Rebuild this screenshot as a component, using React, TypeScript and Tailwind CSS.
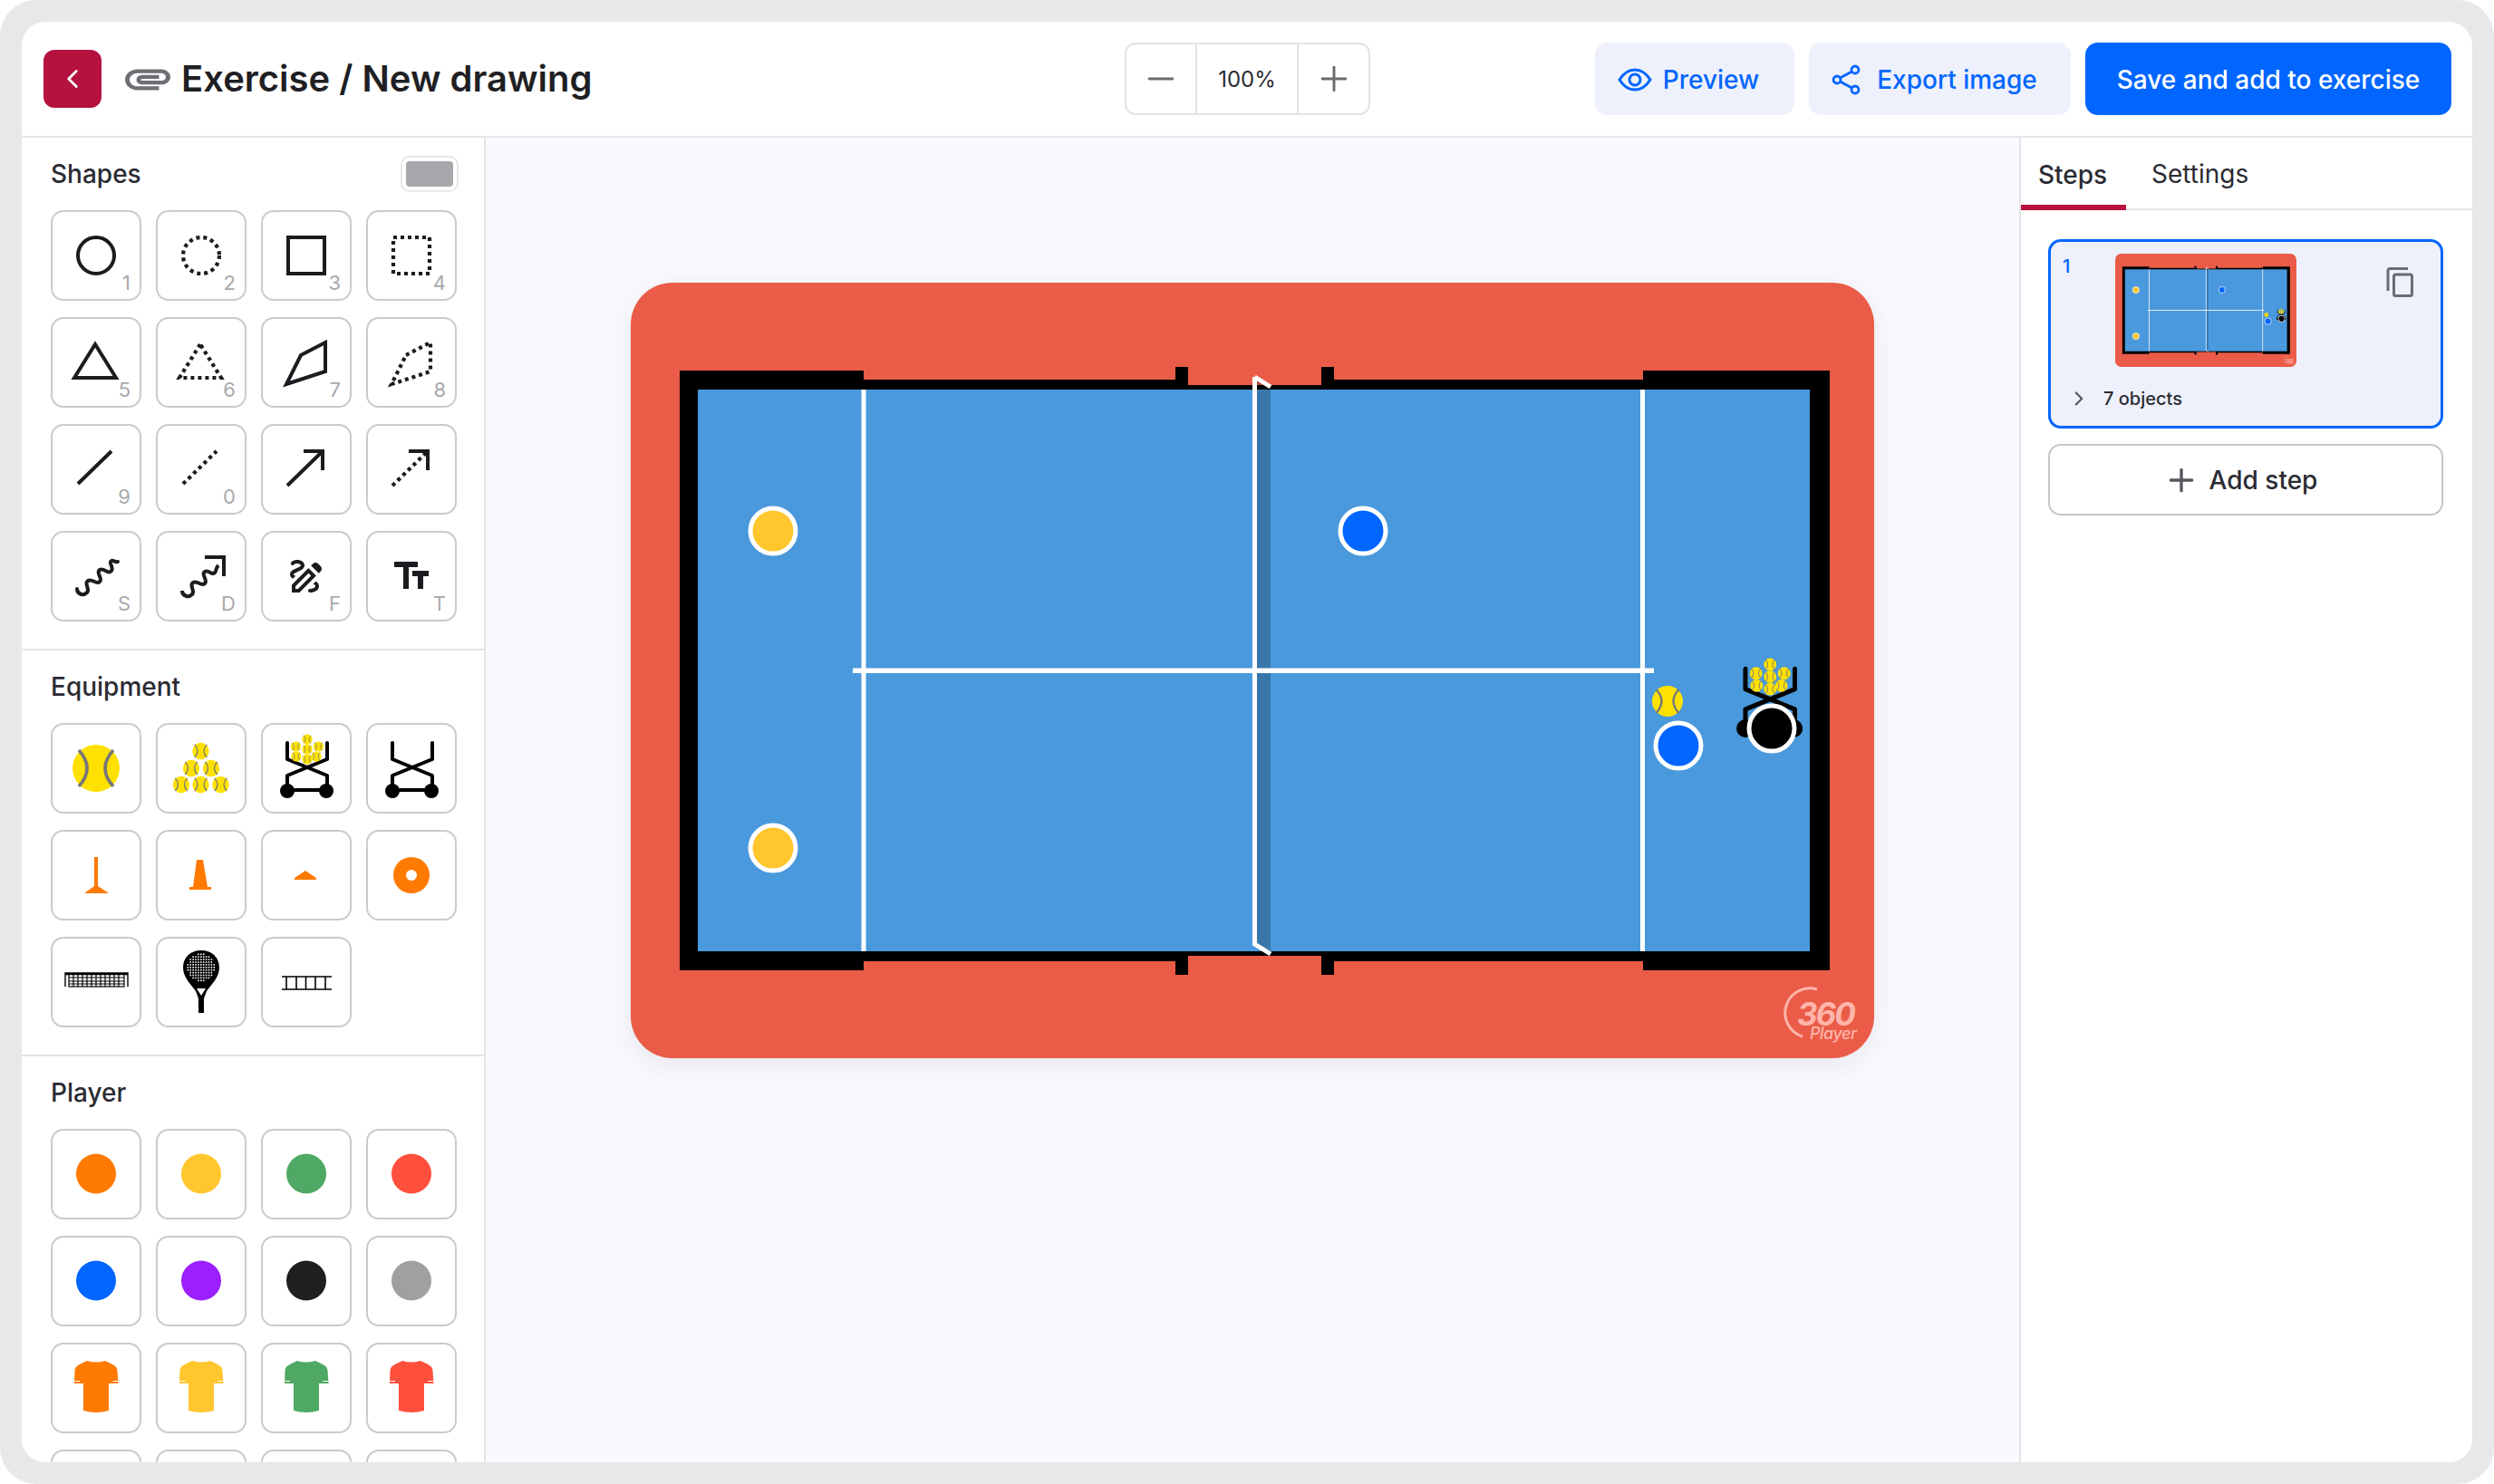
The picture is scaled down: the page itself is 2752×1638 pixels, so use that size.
import React from 'react';
import { ChevronLeft, ChevronRight, Minus, Plus } from 'lucide-react';
import { MdAttachment, MdOutlineDraw, MdTextFields } from 'react-icons/md';

const INK = '#1c1c20';
const ORANGE = '#ff7a00';

const Ball = ({ x, y, r }: { x: number; y: number; r: number }) => (
  <g transform={`translate(${x} ${y}) scale(${r / 26})`}>
    <circle r="26" fill="#ffe100" />
    <path d="M-19 -20Q-1 0 -19 20M19 -20Q1 0 19 20" fill="none" stroke="#777" strokeWidth="3.6" />
  </g>
);

const Cart = () => (
  <g>
    <path d="M29 22V40L73 58V72M73 22V40L29 58V72M29 74H73" fill="none" stroke="#000" strokeWidth="4" strokeLinejoin="round" strokeLinecap="round" />
    <circle cx="29" cy="75" r="8" fill="#000" />
    <circle cx="72" cy="75" r="8" fill="#000" />
  </g>
);

const CART_BALLS = [[51, 18], [38.500, 26], [63.500, 26], [51, 29], [39, 37], [61, 37], [51, 40]];

const LoadedCart = () => (
  <g>
    <Cart />
    {CART_BALLS.map(([x, y], i) => <Ball key={i} x={x} y={y} r={5.6} />)}
  </g>
);

// drawn in page coordinates, so the same art works for the thumbnail
const CourtArt = ({ className }: { className: string }) => (
  <svg viewBox="696 312 1372 856" className={className}>
    <rect x="696" y="312" width="1372" height="856" rx="46" fill="#ea5c48" />
    <path
      fill="#000"
      d="M750 409H953V419H1297V405H1311V425H1458V405H1472V419H1813V409H2019V1071H1813V1061H1472V1076H1458V1055H1311V1076H1297V1061H953V1071H750Z"
    />
    <rect x="770" y="430" width="1227" height="620" fill="#4a99dc" />
    <path d="M1387 419L1402 428V1053L1387 1043Z" fill="#000" fillOpacity="0.22" />
    <rect x="950.500" y="430" width="5" height="620" fill="#fff" />
    <rect x="1810" y="430" width="5" height="620" fill="#fff" />
    <rect x="941" y="737.500" width="884" height="5.500" fill="#fff" />
    <path d="M1384.5 416V1042L1402 1053M1384.5 416L1402 427" fill="none" stroke="#fff" strokeWidth="5" />
    <circle cx="853" cy="586" r="25" fill="#ffc62e" stroke="#fff" strokeWidth="5" />
    <circle cx="853" cy="936" r="25" fill="#ffc62e" stroke="#fff" strokeWidth="5" />
    <circle cx="1504" cy="586" r="25" fill="#0066ff" stroke="#fff" strokeWidth="5" />
    <Ball x={1840} y={774} r={17} />
    <circle cx="1852" cy="823" r="25" fill="#0066ff" stroke="#fff" strokeWidth="5" />
    <g transform="translate(1890 711) scale(1.24)">
      <LoadedCart />
    </g>
    <circle cx="1955" cy="804" r="25" fill="#000" stroke="#fff" strokeWidth="5" />
    <path d="M2005 1092A25 25 0 1 0 1989 1144" fill="none" stroke="#ffb5aa" strokeWidth="3" />
    <text fill="#ffb5aa" fontStyle="italic" fontFamily="Inter, sans-serif">
      <tspan x="1983" y="1132" fontSize="35" fontWeight="700" letterSpacing="-2">360</tspan>
      <tspan x="1997" y="1147" fontSize="18" fontWeight="500" letterSpacing="-0.5">Player</tspan>
    </text>
  </svg>
);

const dash = { strokeDasharray: '4 4', strokeWidth: 4.2 };

const lineIcon = (children: React.ReactNode) => (
  <svg viewBox="0 0 100 100" className="w-full h-full block" fill="none" stroke={INK} strokeWidth="4">
    {children}
  </svg>
);

const WAVE = 'M29 64C29 70 36 72 40 68C44 64 36 58 41 55C46 52 50 60 54 56C58 52 49 46 54 43C59 40 63 49 67 44C70 40 63 35 67 33C69 32 71 35 74 34';
const WAVE_SHORT = 'M29 66C29 72 36 74 40 70C44 66 36 60 41 57C46 54 50 62 54 58C58 54 49 48 54 45C59 42 61 50 65 46C67 44 66 41 69 38';

const SHAPES: { icon: React.ReactNode; key?: string }[] = [
  { icon: lineIcon(<circle cx="50" cy="50" r="20" />), key: '1' },
  { icon: lineIcon(<circle cx="50" cy="50" r="20" {...dash} />), key: '2' },
  { icon: lineIcon(<rect x="30" y="30" width="40" height="40" />), key: '3' },
  { icon: lineIcon(<rect x="30" y="30" width="40" height="40" {...dash} />), key: '4' },
  { icon: lineIcon(<path d="M49 30L26 67H72Z" />), key: '5' },
  { icon: lineIcon(<path d="M49 30L26 67H72Z" {...dash} />), key: '6' },
  { icon: lineIcon(<path d="M44 42L71 28V60L28 74Z" />), key: '7' },
  { icon: lineIcon(<path d="M44 42L71 28V60L28 74Z" {...dash} />), key: '8' },
  { icon: lineIcon(<path d="M30 66L67 30" />), key: '9' },
  { icon: lineIcon(<path d="M30 66L67 30" {...dash} />), key: '0' },
  { icon: lineIcon(<path d="M29 68L67 31M47 30H68V51" />) },
  { icon: lineIcon(<><path d="M29 68L67 31" {...dash} /><path d="M47 30H68V51" /></>) },
  { icon: lineIcon(<path d={WAVE} strokeLinecap="round" />), key: 'S' },
  { icon: lineIcon(<path d={`${WAVE_SHORT}M54 29H75V50`} />), key: 'D' },
  { icon: <div className="w-full h-full flex items-center justify-center"><MdOutlineDraw size={48} color={INK} /></div>, key: 'F' },
  { icon: <div className="w-full h-full flex items-center justify-center"><MdTextFields size={48} color={INK} /></div>, key: 'T' },
];

const NetIcon = () => (
  <svg viewBox="0 0 100 100" className="w-full h-full block" fill="none" stroke="#000" strokeWidth="1.2">
    <path d="M16 55V40H85V55M16 41.5H85" strokeWidth="1.4" />
    <rect x="20" y="41" width="61" height="14" />
    {[25, 30, 35, 40, 45, 50, 55, 60, 65, 70, 75].map((x) => <path key={x} d={`M${x} 41V55`} />)}
    {[45, 49, 52].map((y) => <path key={y} d={`M20 ${y}H81`} />)}
  </svg>
);

const RacketIcon = () => {
  const dots: React.ReactNode[] = [];
  for (let i = -5; i <= 5; i++) {
    for (let j = -5; j <= 5; j++) {
      if (i * i + j * j <= 26) {
        dots.push(<rect key={`${i}-${j}`} x={49 + i * 2.9} y={33 + j * 2.9} width="1.6" height="1.6" fill="#fff" />);
      }
    }
  }
  return (
    <svg viewBox="0 0 100 100" className="w-full h-full block">
      <path d="M30 34C30 22 39 15 50 15C61 15 70 22 70 34C70 45 61 53 56 60L53 68V84H47V68L44 60C39 53 30 45 30 34Z" fill="#000" />
      <path d="M45 57H55L50 65Z" fill="#fff" />
      {dots}
    </svg>
  );
};

const LadderIcon = () => (
  <svg viewBox="0 0 100 100" className="w-full h-full block" fill="none" stroke="#000" strokeWidth="1.6">
    <path d="M23 44H78M23 58H78M28 44V58M39 44V58M49.500 44V58M60 44V58M71 44V58" />
  </svg>
);

const EQUIPMENT: React.ReactNode[] = [
  <svg viewBox="0 0 100 100" className="w-full h-full block"><Ball x={50} y={50} r={26} /></svg>,
  <svg viewBox="0 0 100 100" className="w-full h-full block">
    {[[49.500, 31], [39, 50], [61, 50], [28, 68], [49.500, 68], [71.500, 68]].map(([x, y], i) => <Ball key={i} x={x} y={y} r={9.200} />)}
  </svg>,
  <svg viewBox="0 0 100 100" className="w-full h-full block"><LoadedCart /></svg>,
  <svg viewBox="0 0 100 100" className="w-full h-full block"><Cart /></svg>,
  <svg viewBox="0 0 100 100" className="w-full h-full block" fill={ORANGE}><path d="M48 30H52V62L64 70H37L48 62Z" /></svg>,
  <svg viewBox="0 0 100 100" className="w-full h-full block" fill={ORANGE}><path d="M45 33H52L57 63H61V66H37V63H41Z" /></svg>,
  <svg viewBox="0 0 100 100" className="w-full h-full block" fill={ORANGE}><path d="M49 45L61 53V55H37V53Z" /></svg>,
  <svg viewBox="0 0 100 100" className="w-full h-full block"><circle cx="50" cy="50" r="20" fill={ORANGE} /><circle cx="50" cy="50" r="6" fill="#fff" /></svg>,
  <NetIcon />,
  <RacketIcon />,
  <LadderIcon />,
];

const DOTS = ['#ff7a00', '#ffc62e', '#4fa863', '#ff4f3d', '#0066ff', '#9b1fff', '#1f1e21', '#a09fa2'];
const SHIRTS = ['#ff7a00', '#ffc62e', '#4fa863', '#ff4f3d'];

const Shirt = ({ color }: { color: string }) => (
  <svg viewBox="0 0 100 100" className="w-full h-full block">
    <path
      fill={color}
      d="M40 20Q50 23 60 20L62 21C68 24 73 25 73.500 31L74.500 45H64V75Q50 79 36 75V45H26L26.500 31C27 25 32 24 38 21Z"
    />
    <path d="M26.500 42.500H32M68.500 42.500H74" stroke="#fff" strokeWidth="1" />
  </svg>
);

const Tool = ({ children, hint }: { children?: React.ReactNode; hint?: string }) => (
  <button className="relative w-[100px] h-[100px] shrink-0 rounded-[14px] bg-white ring-2 ring-inset ring-[#cbcacd]">
    {children}
    {hint && <span className="absolute right-[12px] bottom-[8px] text-[22px] leading-[24px] text-[#a9a8ac]">{hint}</span>}
  </button>
);

const ToolGrid = ({ children }: { children: React.ReactNode }) => (
  <div className="mt-[20px] grid grid-cols-[repeat(4,100px)] gap-x-[16px] gap-y-[18px]">{children}</div>
);

const SectionTitle = ({ children }: { children: React.ReactNode }) => (
  <h2 className="text-[28px] leading-[40px] font-medium text-[#2b2b33]">{children}</h2>
);

const App = () => {
  return (
    <div className="w-[2752px] h-[1638px] bg-white overflow-hidden [font-family:Inter,sans-serif]">
      <div className="w-full h-full p-[24px] rounded-[40px] bg-[#e8e7ea]">
        <div className="w-full h-full flex flex-col rounded-[26px] overflow-hidden bg-white">
          {/* Header */}
          <header className="h-[128px] shrink-0 grid grid-cols-[1fr_auto_1fr] items-center pl-[24px] pr-[23px] border-b-2 border-[#e5e4e8]">
            <div className="flex items-center">
              <button className="w-[64px] h-[64px] rounded-[12px] bg-[#b5123f] flex items-center justify-center">
                <ChevronLeft size={34} color="#fff" strokeWidth={2} />
              </button>
              <MdAttachment className="ml-[21px] w-[60px] h-[50px]" color="#6e6e74" preserveAspectRatio="none" />
              <h1 className="ml-[7px] text-[40px] leading-[48px] font-semibold text-[#1f1f24]">Exercise / New drawing</h1>
            </div>
            <div className="flex h-[80px] rounded-[12px] border-2 border-[#e3e2e5] text-[#6b6b70]">
              <button className="w-[76px] flex items-center justify-center"><Minus size={44} strokeWidth={1.6} /></button>
              <div className="w-[114px] pt-[2px] flex items-center justify-center border-x-2 border-[#e3e2e5] text-[24px] text-[#2b2b33]">100%</div>
              <button className="w-[77px] flex items-center justify-center"><Plus size={44} strokeWidth={1.6} /></button>
            </div>
            <div className="flex justify-end gap-[16px] text-[28px] font-medium">
              <button className="h-[80px] w-[220px] pr-[14px] pt-[2px] flex items-center justify-center gap-[12px] rounded-[14px] bg-[#eef1fc] text-[#0066ff]">
                <svg viewBox="0 0 38 26" className="w-[38px] h-[26px]" fill="none" stroke="currentColor" strokeWidth="3">
                  <path d="M2 13C7 5 13 2 19 2C25 2 31 5 36 13C31 21 25 24 19 24C13 24 7 21 2 13Z" />
                  <circle cx="19" cy="13" r="6" />
                </svg>
                Preview
              </button>
              <button className="h-[80px] w-[289px] pr-[12px] pt-[2px] flex items-center justify-center gap-[18px] rounded-[14px] bg-[#eef1fc] text-[#0066ff]">
                <svg viewBox="0 0 32 34" className="w-[32px] h-[34px]" fill="none" stroke="currentColor" strokeWidth="2.800">
                  <circle cx="26" cy="6" r="4" />
                  <circle cx="6" cy="17" r="4" />
                  <circle cx="26" cy="28" r="4" />
                  <path d="M9.500 15L22.500 8M9.500 19L22.500 26" />
                </svg>
                Export image
              </button>
              <button className="h-[80px] w-[404px] pt-[2px] rounded-[14px] bg-[#0066ff] text-white">Save and add to exercise</button>
            </div>
          </header>

          <div className="flex-1 min-h-0 flex">
            {/* Tools */}
            <aside className="w-[512px] shrink-0 overflow-hidden border-r-2 border-[#e5e4e8] bg-white">
              <section className="pl-[32px] pr-[28px] pt-[20px] pb-[30px] border-b-2 border-[#e5e4e8]">
                <div className="flex items-center justify-between">
                  <SectionTitle>Shapes</SectionTitle>
                  <div className="w-[64px] h-[40px] p-[4px] rounded-[10px] border-2 border-[#e8e7ea]">
                    <div className="w-full h-full rounded-[4px] bg-[#a8a7ab]" />
                  </div>
                </div>
                <ToolGrid>
                  {SHAPES.map((s, i) => <Tool key={i} hint={s.key}>{s.icon}</Tool>)}
                </ToolGrid>
              </section>
              <section className="pl-[32px] pr-[28px] pt-[20px] pb-[30px] border-b-2 border-[#e5e4e8]">
                <SectionTitle>Equipment</SectionTitle>
                <ToolGrid>
                  {EQUIPMENT.map((e, i) => <Tool key={i}>{e}</Tool>)}
                </ToolGrid>
              </section>
              <section className="pl-[32px] pr-[28px] pt-[20px]">
                <SectionTitle>Player</SectionTitle>
                <ToolGrid>
                  {DOTS.map((c) => (
                    <Tool key={c}>
                      <svg viewBox="0 0 100 100" className="w-full h-full block"><circle cx="50" cy="49.500" r="22" fill={c} /></svg>
                    </Tool>
                  ))}
                  {SHIRTS.map((c) => <Tool key={c}><Shirt color={c} /></Tool>)}
                  <Tool /><Tool /><Tool /><Tool />
                </ToolGrid>
              </section>
            </aside>

            {/* Canvas */}
            <main className="flex-1 min-w-0 flex justify-center pt-[160px] bg-[#f9f9fe]">
              <div className="w-[1372px] h-[856px] rounded-[46px] shadow-[0_8px_32px_rgba(40,40,70,0.09)]">
                <CourtArt className="w-full h-full block" />
              </div>
            </main>

            {/* Steps */}
            <aside className="w-[500px] shrink-0 border-l-2 border-[#e5e4e8] bg-white">
              <div className="h-[80px] flex border-b-2 border-[#e5e4e8] text-[28px] text-[#2b2b33]">
                <button className="relative w-[116px] h-[80px] pr-[2px] pt-[2px] font-medium">
                  Steps
                  <span className="absolute left-0 right-0 bottom-0 h-[6px] bg-[#b5123f]" />
                </button>
                <button className="ml-[28px] h-[78px] pt-[2px]">Settings</button>
              </div>
              <div className="pl-[30px] pr-[32px] pt-[32px]">
                <div className="h-[209px] rounded-[14px] border-[3px] border-[#0066ff] bg-[#eef1fc] pl-[13px] pr-[30px] pt-[13px]">
                  <div className="flex items-start">
                    <span className="w-[58px] pt-[2px] text-[20px] leading-[24px] font-medium text-[#0066ff]">1</span>
                    <CourtArt className="w-[200px] h-[125px] block" />
                    <svg viewBox="0 0 30 33" className="ml-auto mt-[15px] w-[30px] h-[33px]" fill="none" stroke="#6b6b73" strokeWidth="3" strokeLinejoin="round">
                      <path d="M2 26V4Q2 1.500 4.500 1.500H24" />
                      <rect x="8.500" y="8" width="20" height="23.500" rx="2" />
                    </svg>
                  </div>
                  <div className="mt-[24px] ml-[5px] h-[22px] flex items-center gap-[14px] text-[20px] font-medium text-[#2c2c33]">
                    <ChevronRight size={26} color="#55555c" strokeWidth={2} />
                    7 objects
                  </div>
                </div>
                <button className="mt-[17px] w-full h-[79px] pr-[12px] flex items-center justify-center gap-[11px] rounded-[14px] border-2 border-[#c6c5c9] text-[28px] font-medium text-[#2b2b33]">
                  <Plus size={40} color="#55555c" strokeWidth={2} />
                  Add step
                </button>
              </div>
            </aside>
          </div>
        </div>
      </div>
    </div>
  );
};

export default App;
